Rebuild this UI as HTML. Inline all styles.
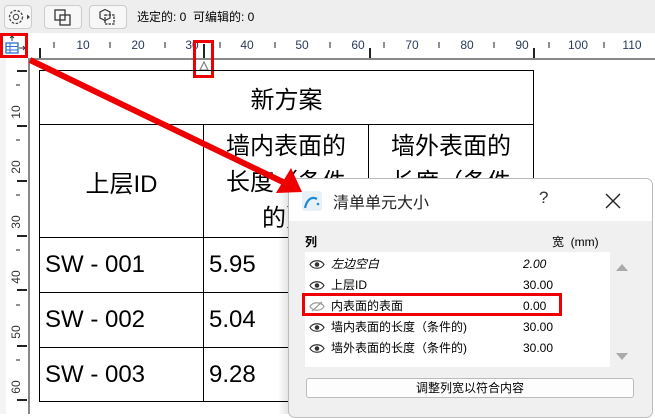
<!DOCTYPE html><html><head><meta charset="utf-8"><style>
*{margin:0;padding:0;box-sizing:border-box}
body{width:655px;height:414px;overflow:hidden;background:#fff;position:relative;font-family:"Liberation Sans","Noto Sans CJK SC",sans-serif;color:#000}
.a{position:absolute}
.btn{position:absolute;top:5px;height:24px;border:1px solid #ccc;border-radius:4px;background:#f7f7f7}
.rl{position:absolute;font-size:12px;color:#2a3a5a;top:38px;width:30px;text-align:center;margin-left:-15px}
.vl{position:absolute;font-size:12px;color:#333;left:6px;transform:rotate(-90deg);width:20px;text-align:center}
td{border:1.5px solid #000;font-size:24px;vertical-align:middle}
.row{position:absolute;left:16px;font-size:12px;height:21px;line-height:21px}
.eye{position:absolute;left:4px;top:5px}
</style></head><body>
<div class="a" style="left:0;top:0;width:655px;height:33px;background:#eeeeee"></div>
<div class="btn" style="left:4px;width:28px"><svg width="26" height="22" viewBox="0 0 26 22"><circle cx="11" cy="11" r="6.5" fill="none" stroke="#444" stroke-width="1.3" stroke-dasharray="2.5 1.5"/><circle cx="11" cy="11" r="2.7" fill="none" stroke="#444"/><path d="M22 8.5l3 2.5-3 2.5z" fill="#444"/></svg></div>
<div class="btn" style="left:44px;width:38px"><svg width="36" height="22"><rect x="10" y="4" width="10" height="10" fill="none" stroke="#333" stroke-width="1.3"/><rect x="15" y="9" width="10" height="10" fill="none" stroke="#333" stroke-width="1.3"/></svg></div>
<div class="btn" style="left:89px;width:38px"><svg width="36" height="22"><path d="M10 6l5-2.5 5 2.5v6l-5 2.5-5-2.5z" fill="none" stroke="#333" stroke-width="1.2"/><rect x="15" y="9" width="9" height="9" fill="none" stroke="#333" stroke-width="1.3" stroke-dasharray="2.5 1"/></svg></div>
<div class="a" style="left:137px;top:8px;font-size:12px">选定的: 0&nbsp; 可编辑的: 0</div>
<div class="a" style="left:0;top:33px;width:655px;height:26px;background:#fff"></div>
<div class="a" style="left:28px;top:58px;width:627px;height:2px;background:#888"></div>
<div class="a" style="left:0;top:58px;width:6px;height:356px;background:#f4f4f4"></div>
<div class="a" style="left:28px;top:58px;width:2px;height:356px;background:#888"></div>
<div class="rl" style="left:83px">10</div><div class="rl" style="left:138px">20</div><div class="rl" style="left:192px">30</div><div class="rl" style="left:247px">40</div><div class="rl" style="left:302px">50</div><div class="rl" style="left:358px">60</div><div class="rl" style="left:412px">70</div><div class="rl" style="left:467px">80</div><div class="rl" style="left:522px">90</div><div class="rl" style="left:578px">100</div><div class="rl" style="left:632px">110</div>
<svg class="a" style="left:0;top:0" width="655" height="414">
<g stroke="#222" stroke-width="1">
<path d="M54 42v6M110 42v6M165 42v6M220 42v6M275 42v6M330 42v6M384 42v6M439 42v6M494 42v6M549 42v6M604 42v6"/>
<path d="M40 48v10M204 44v14M370 48v10M534 48v10" stroke-width="2"/>
<path d="M16 85h4M16 140h4M16 195h4M16 250h4M16 305h4M16 360h4"/>
<path d="M17 71h10M17 126h10M17 181h10M17 236h10M17 290h10M17 346h10M17 400h10" stroke-width="2"/>
</g>
<path d="M200 70l4-8 4 8z" fill="none" stroke="#888" stroke-width="1.3"/>
</svg>
<div class="vl" style="top:105px">10</div><div class="vl" style="top:160px">20</div><div class="vl" style="top:215px">30</div><div class="vl" style="top:270px">40</div><div class="vl" style="top:325px">50</div><div class="vl" style="top:380px">60</div>
<svg class="a" style="left:4px;top:34px" width="24" height="22"><rect x="2" y="9" width="12" height="10" fill="#fff" stroke="#2a6fd6" stroke-width="1.3"/><path d="M2 12.5h12M2 16h12M6 9v10" stroke="#2a6fd6"/><path d="M8 7V2M6 4l2-2 2 2M15 14h6M19 12l2 2-2 2" stroke="#333" fill="none"/></svg>
<div class="a" style="left:0;top:33px;width:28px;height:25px;border:3px solid #e00"></div>
<div class="a" style="left:193px;top:40px;width:21px;height:38px;border:3px solid #e00"></div>
<table class="a" style="left:39px;top:70px;border-collapse:collapse;width:495px">
<tr style="height:54px"><td colspan="3" style="text-align:center">新方案</td></tr>
<tr style="height:109px"><td style="width:164px;text-align:center">上层ID</td><td style="width:165px;text-align:center;line-height:36px;vertical-align:top;padding-top:4px">墙内表面的<br>长度（条件<br>的）</td><td style="text-align:center;line-height:36px;vertical-align:top;padding-top:4px">墙外表面的<br>长度（条件</td></tr>
<tr style="height:55px"><td style="padding-left:5px">SW - 001</td><td style="padding-left:5px">5.95</td><td></td></tr>
<tr style="height:55px"><td style="padding-left:5px">SW - 002</td><td style="padding-left:5px">5.04</td><td></td></tr>
<tr style="height:54px"><td style="padding-left:5px">SW - 003</td><td style="padding-left:5px">9.28</td><td></td></tr>
</table>
<div class="a" style="left:278px;top:178px;width:12px;height:236px;background:linear-gradient(90deg,rgba(255,255,255,0),rgba(0,0,0,.12))"></div>
<div class="a" style="left:288px;top:178px;width:365px;height:240px;background:#f0f0f0;border:1px solid #bbb;border-radius:7px;overflow:hidden">
<div class="a" style="left:0;top:0;width:365px;height:42px;background:#fff"></div>
<svg class="a" style="left:13px;top:12px" width="20" height="20"><rect width="20" height="20" rx="3" fill="#e8f0f8"/><path d="M3 17C5 8 10 5 15 8" fill="none" stroke="#1b8ad6" stroke-width="2.2"/><circle cx="16" cy="13" r="1.3" fill="#1b8ad6"/></svg>
<div class="a" style="left:44px;top:10px;font-size:16px;color:#222">清单单元大小</div>
<div class="a" style="left:250px;top:9px;font-size:17px;color:#333">?</div>
<svg class="a" style="left:316px;top:14px" width="16" height="16"><path d="M1 1L15 15M15 1L1 15" stroke="#222" stroke-width="1.4"/></svg>
<div class="a" style="left:16px;top:54px;font-size:12px;font-weight:bold">列</div>
<div class="a" style="left:263px;top:54px;font-size:12px">宽 &nbsp;(mm)</div>
<div class="a" style="left:16px;top:73px;width:305px;height:115px;background:#fff">
<div class="row" style="top:2px;left:0;width:305px"><svg class="eye" width="16" height="11"><path d="M1 5.5C4 0.5 12 0.5 15 5.5C12 10.5 4 10.5 1 5.5z" fill="none" stroke="#333" stroke-width="1.2"/><circle cx="8" cy="5.5" r="2.3" fill="#333"/></svg><span style="position:absolute;left:26px;font-style:italic">左边空白</span><span style="position:absolute;left:218px;font-style:italic">2.00</span></div>
<div class="row" style="top:23px;left:0;width:305px"><svg class="eye" width="16" height="11"><path d="M1 5.5C4 0.5 12 0.5 15 5.5C12 10.5 4 10.5 1 5.5z" fill="none" stroke="#333" stroke-width="1.2"/><circle cx="8" cy="5.5" r="2.3" fill="#333"/></svg><span style="position:absolute;left:26px">上层ID</span><span style="position:absolute;left:218px">30.00</span></div>
<div class="row" style="top:44px;left:0;width:305px"><svg class="eye" width="16" height="11"><path d="M1 5.5C4 0.5 12 0.5 15 5.5C12 10.5 4 10.5 1 5.5z" fill="none" stroke="#999" stroke-width="1.2"/><path d="M3 10L13 1" stroke="#999" stroke-width="1.2"/></svg><span style="position:absolute;left:26px">内表面的表面</span><span style="position:absolute;left:218px">0.00</span></div>
<div class="row" style="top:65px;left:0;width:305px"><svg class="eye" width="16" height="11"><path d="M1 5.5C4 0.5 12 0.5 15 5.5C12 10.5 4 10.5 1 5.5z" fill="none" stroke="#333" stroke-width="1.2"/><circle cx="8" cy="5.5" r="2.3" fill="#333"/></svg><span style="position:absolute;left:26px">墙内表面的长度（条件的)</span><span style="position:absolute;left:218px">30.00</span></div>
<div class="row" style="top:86px;left:0;width:305px"><svg class="eye" width="16" height="11"><path d="M1 5.5C4 0.5 12 0.5 15 5.5C12 10.5 4 10.5 1 5.5z" fill="none" stroke="#333" stroke-width="1.2"/><circle cx="8" cy="5.5" r="2.3" fill="#333"/></svg><span style="position:absolute;left:26px">墙外表面的长度（条件的)</span><span style="position:absolute;left:218px">30.00</span></div>
</div>
<svg class="a" style="left:326px;top:82px" width="14" height="100"><path d="M1 10l6-7 6 7z M1 92l6 7 6-7z" fill="#aaa"/></svg>
<div class="a" style="left:17px;top:199px;width:328px;height:20px;background:#fdfdfd;border:1px solid #bbb;border-radius:3px;font-size:12px;text-align:center;line-height:18px">调整列宽以符合内容</div>
</div>
<div class="a" style="left:302px;top:293px;width:260px;height:23px;border:3px solid #e00"></div>
<svg class="a" style="left:0;top:0" width="655" height="414"><path d="M30 60L285 183" stroke="#e00" stroke-width="6"/><path d="M302 192L276 193L291 168z" fill="#e00"/></svg>
</body></html>
